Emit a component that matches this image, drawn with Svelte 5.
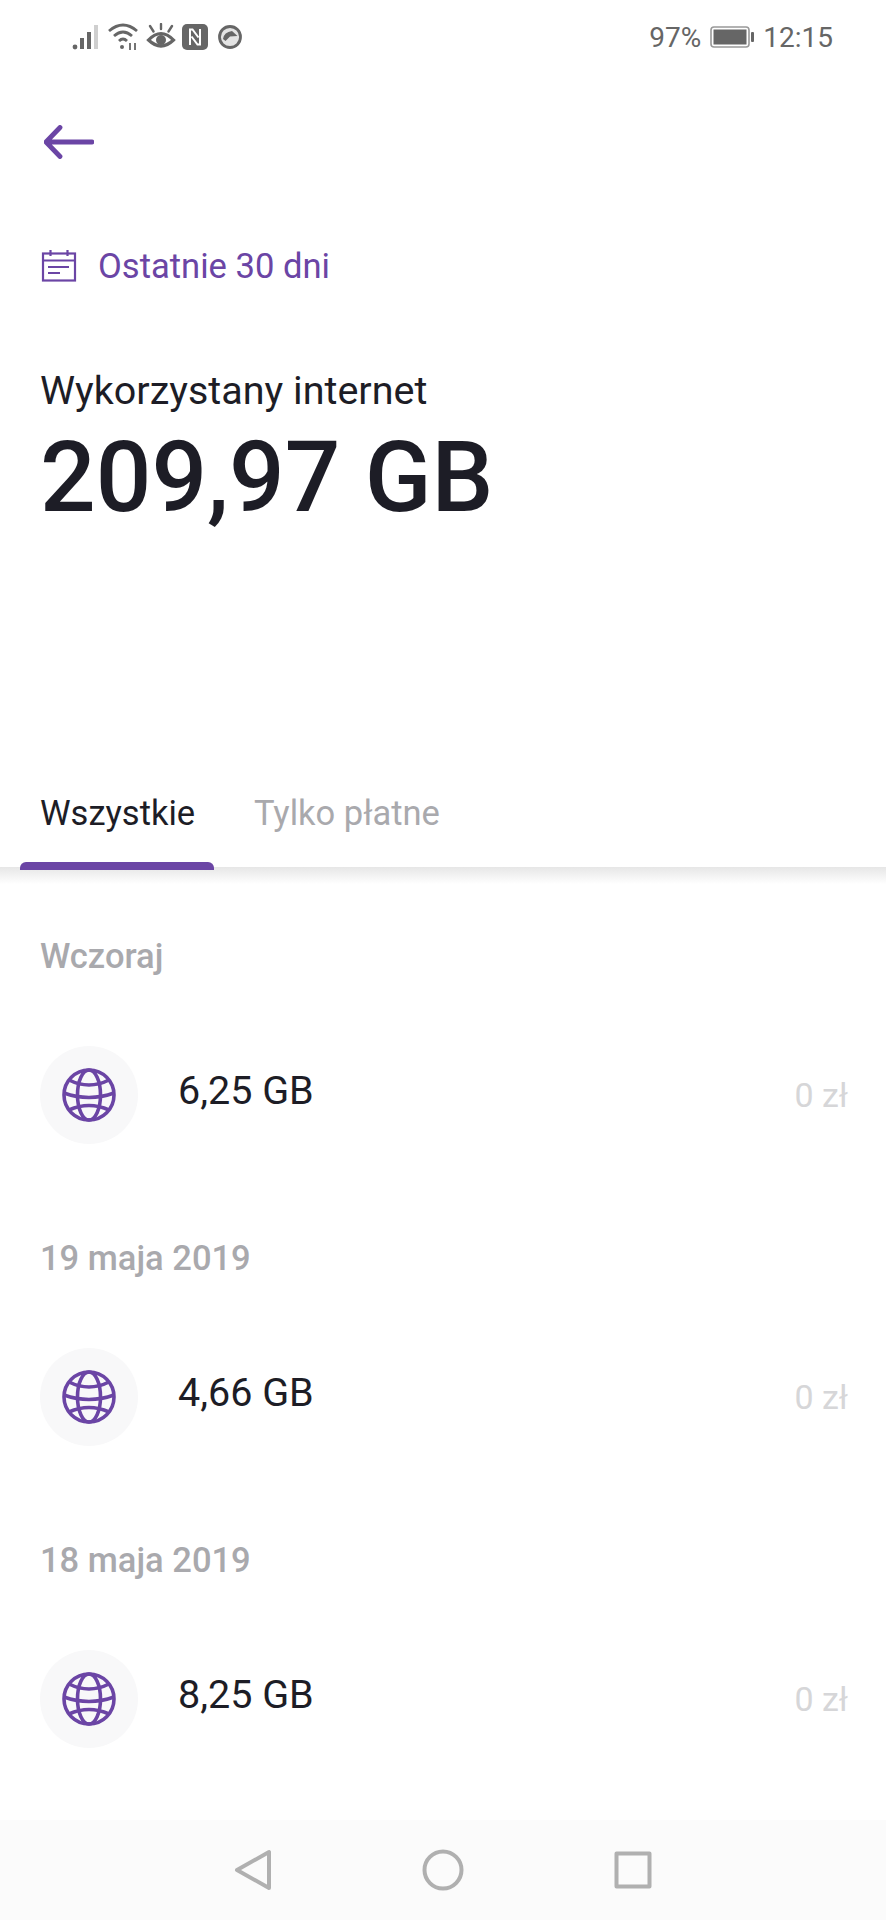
<script>
  const days = [
    { label: 'Wczoraj', used: '6,25 GB' },
    { label: '19 maja 2019', used: '4,66 GB' },
    { label: '18 maja 2019', used: '8,25 GB' }
  ];
</script>

<div class="screen">
  <header class="status">
    <div class="status-left">
      <svg width="30" height="28" viewBox="0 0 30 28">
        <circle cx="3" cy="24" r="2.400" fill="#666" />
        <rect x="8" y="15" width="4" height="11" fill="#666" />
        <rect x="15" y="9" width="4" height="17" fill="#666" />
        <rect x="22" y="2" width="4" height="24" fill="#cfcfcf" />
      </svg>
      <svg width="32" height="28" viewBox="0 0 32 28" fill="none" stroke="#666" stroke-width="2.800">
        <path d="M1 8 Q15 -4 29 8" />
        <path d="M6 13 Q15 5 24 13" />
        <path d="M11 18 Q15 14 19 18" />
        <circle cx="14" cy="24" r="2" fill="#666" stroke="none" />
        <path d="M22 20v7M27 20v7" stroke-width="1.800" />
      </svg>
      <svg width="30" height="28" viewBox="0 0 30 28" fill="none" stroke="#666" stroke-width="3.200">
        <path d="M2.500 17 Q15 4 27.500 17 Q15 29 2.500 17Z" />
        <circle cx="15" cy="17" r="5" fill="#666" stroke="none" />
        <path d="M4 3l3.500 5.500M15 1v5M26 3l-3.500 5.500" stroke-width="2.400" stroke-linecap="round" />
      </svg>
      <svg width="26" height="28" viewBox="0 0 26 28">
        <rect y="1" width="26" height="26" rx="5" fill="#666" />
        <path d="M8 22V6.500h2.500l6 8M18 6v15.500h-2.500l-6-8" fill="none" stroke="#fff" stroke-width="2" />
      </svg>
      <svg class="dial" width="26" height="26" viewBox="0 0 26 26">
        <circle cx="13" cy="13" r="10.500" fill="#e4e4e4" stroke="#666" stroke-width="2.800" />
        <path d="M6 15 Q7 8 15 7 L20.500 12 L13 12.500 L8.500 17Z" fill="#666" />
      </svg>
    </div>
    <div class="status-right">
      <span>97%</span>
      <svg width="44" height="24" viewBox="0 0 44 24">
        <rect x="1" y="2" width="38" height="20" rx="3" fill="none" stroke="#999" stroke-width="1.600" />
        <rect x="3.500" y="4.500" width="33" height="15" fill="#666" />
        <rect x="41" y="7" width="3" height="10" rx="1" fill="#666" />
      </svg>
      <span>12:15</span>
    </div>
  </header>

  <button class="back" aria-label="Wstecz">
    <svg width="50" height="34" viewBox="0 0 50 34" fill="none" stroke="#6b45a5" stroke-width="4.800" stroke-linecap="round" stroke-linejoin="round">
      <path d="M48 17H3M16 2.500 2 17l14 14.500" />
    </svg>
  </button>

  <div class="range">
    <svg width="36" height="34" viewBox="0 0 36 34" fill="none" stroke="#6b45a5" stroke-width="2.200">
      <rect x="2" y="4.500" width="32" height="27" />
      <path d="M2 11.500h32M9.500 1v6M26.500 1v6M7 18h21M7 24h12" />
    </svg>
    <span>Ostatnie 30 dni</span>
  </div>

  <section class="usage">
    <p class="usage-label">Wykorzystany internet</p>
    <p class="usage-value">209,97 GB</p>
  </section>

  <nav class="tabs">
    <div class="tab active">Wszystkie</div>
    <div class="tab">Tylko płatne</div>
  </nav>

  <main class="list">
    {#each days as day}
      <section class="day">
        <h2>{day.label}</h2>
        <div class="row">
          <div class="badge">
            <svg width="56" height="56" viewBox="0 0 56 56" fill="none" stroke="#6b45a5" stroke-width="3.600">
              <circle cx="28" cy="28" r="25" />
              <ellipse cx="28" cy="28" rx="11.500" ry="25" />
              <path d="M8 13 Q28 23 48 13M3 26 Q28 35 53 26M8 43 Q28 34 48 43" />
            </svg>
          </div>
          <span class="used">{day.used}</span>
          <span class="cost">0 zł</span>
        </div>
      </section>
    {/each}
  </main>

  <footer class="nav">
    <svg width="38" height="42" viewBox="0 0 38 42" fill="none" stroke="#b0b0b0" stroke-width="4" stroke-linejoin="round">
      <path d="M35 3v36L3 21Z" />
    </svg>
    <svg width="42" height="42" viewBox="0 0 42 42" fill="none" stroke="#b0b0b0" stroke-width="4">
      <circle cx="21" cy="21" r="18.500" />
    </svg>
    <svg width="38" height="38" viewBox="0 0 38 38" fill="none" stroke="#b0b0b0" stroke-width="4" stroke-linejoin="round">
      <rect x="2.500" y="2.500" width="33" height="33" />
    </svg>
  </footer>
</div>

<style>
  :global(body) {
    margin: 0;
    background: #fff;
  }

  .screen {
    width: 886px;
    height: 1920px;
    display: flex;
    flex-direction: column;
    overflow: hidden;
    font-family: Roboto, "Liberation Sans", sans-serif;
    color: #1d1d26;
    background: #fff;
  }

  .status {
    height: 74px;
    flex: none;
    display: flex;
    justify-content: space-between;
    align-items: center;
    padding: 0 53px 0 72px;
    color: #666;
    font-size: 28px;
  }

  .status-left,
  .status-right {
    display: flex;
    align-items: center;
  }

  .status-left {
    gap: 6px;
  }

  .dial {
    margin-left: 3px;
  }

  .status-right {
    gap: 9px;
  }

  .back {
    align-self: flex-start;
    margin: 51px 0 0 44px;
    padding: 0;
    border: 0;
    background: none;
    display: block;
    height: 34px;
  }

  .range {
    margin: 87px 0 0 41px;
    display: flex;
    align-items: center;
    gap: 21px;
    color: #6b45a5;
    font-size: 34.600px;
    height: 40px;
  }

  .usage {
    margin: 82px 0 0 40px;
  }

  .usage-label {
    margin: 0;
    font-size: 39.500px;
    line-height: 46px;
  }

  .usage-value {
    margin: 8px 0 0;
    font-size: 98px;
    font-weight: 500;
    line-height: 112px;
  }

  .tabs {
    margin-top: 250px;
    height: 86px;
    flex: none;
    display: flex;
    position: relative;
    box-sizing: border-box;
  }

  /* soft band under the tab strip */
  .tabs::after {
    content: "";
    position: absolute;
    left: 0;
    right: 0;
    top: 83px;
    height: 17px;
    background: linear-gradient(#e6e6e6, #fff);
  }

  .tab {
    padding: 7px 20px 0;
    font-size: 34.500px;
    line-height: 44px;
    color: #a9a9ad;
    box-sizing: border-box;
    position: relative;
  }

  .tab.active {
    color: #1d1d26;
    width: 194px;
    margin: 0 20px 0 20px;
  }

  .tab.active::after {
    content: "";
    position: absolute;
    left: 0;
    right: 0;
    bottom: 0;
    height: 8px;
    border-radius: 6px 6px 0 0;
    background: #6b45a5;
    z-index: 1;
  }

  .list {
    flex: 1;
    min-height: 0;
    overflow: hidden;
    padding: 66px 38px 0 40px;
  }

  .day {
    height: 302px;
  }

  h2 {
    margin: 0;
    font-size: 34.500px;
    font-weight: 500;
    line-height: 40px;
    color: #a9a9ad;
  }

  .row {
    margin-top: 70px;
    display: flex;
    align-items: center;
  }

  .badge {
    width: 98px;
    height: 98px;
    border-radius: 50%;
    background: #f8f8f9;
    display: flex;
    align-items: center;
    justify-content: center;
    flex: none;
  }

  .used {
    margin-left: 40px;
    margin-top: -9px;
    font-size: 39.500px;
    flex: 1;
  }

  .cost {
    font-size: 34px;
    color: #d6d6d8;
  }

  .nav {
    height: 100px;
    flex: none;
    background: #fbfbfb;
    display: flex;
    align-items: center;
    justify-content: center;
    gap: 150px;
  }
</style>
